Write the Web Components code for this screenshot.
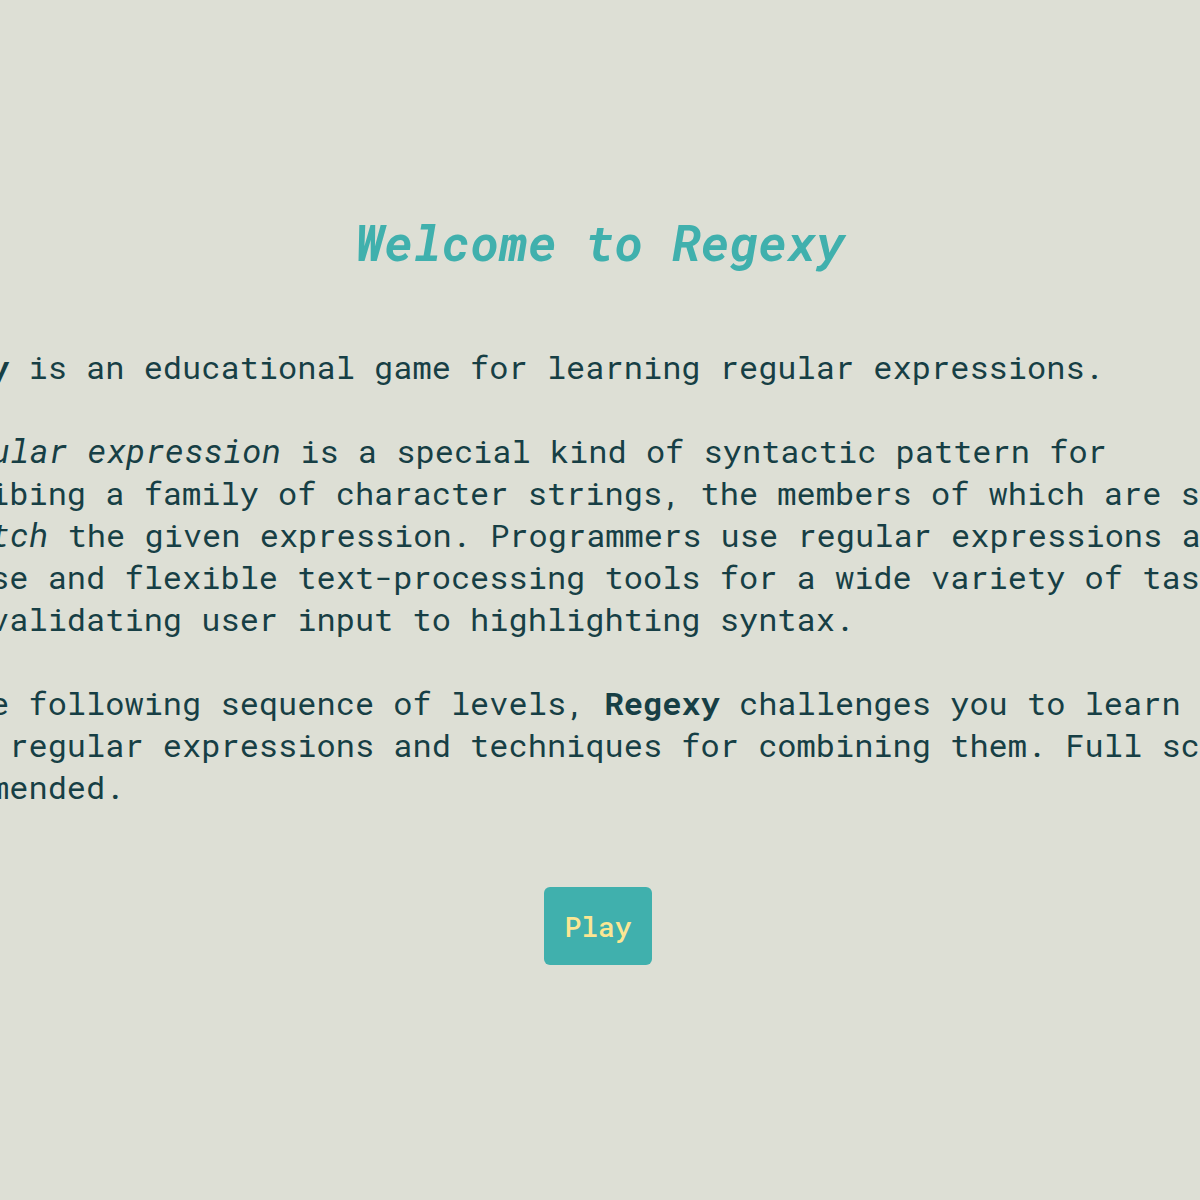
<!DOCTYPE html>
<html lang="en">
<head>
<meta charset="utf-8">
<title>Regexy</title>
<style>
  html, body { margin: 0; height: 100%; }
  body {
    --teal: #40b0ad;
    --ink: #173f45;
    --butter: #fbe693;
    background: #dddfd5;
    color: var(--ink);
    font-family: "Roboto Mono", "Liberation Mono", monospace;
    overflow: hidden;
  }
  game-intro i { font-size: 33px; line-height: 1; }
</style>
</head>
<body>
<welcome-screen>
  <game-title slot="title">Welcome to Regexy</game-title>
  <game-intro>
    <p><b>Regexy</b> is an educational game for learning regular expressions.</p>
    <p>A <i>regular expression</i> is a special kind of syntactic pattern for describing a family of character strings, the members of which are said to <i>match</i> the given expression. Programmers use regular expressions as concise and flexible text-processing tools for a wide variety of tasks, from validating user input to highlighting syntax.</p>
    <p>In the following sequence of levels, <b>Regexy</b> challenges you to learn basic regular expressions and techniques for combining them. Full screen recommended.</p>
  </game-intro>
  <play-button slot="action">Play</play-button>
</welcome-screen>
<script>
  function define(name, markup) {
    const template = document.createElement('template');
    template.innerHTML = markup;
    customElements.define(name, class extends HTMLElement {
      constructor() {
        super();
        this.attachShadow({ mode: 'open' }).append(template.content.cloneNode(true));
      }
    });
  }

  define('welcome-screen', `
    <style>
      :host { display: block; height: 100%; }
      main {
        box-sizing: border-box;
        min-height: 100%;
        padding-bottom: 24px;
        display: flex;
        flex-direction: column;
        align-items: center;
        justify-content: center;
      }
      .copy { margin: 72px 0 79px; }
    </style>
    <main>
      <slot name="title"></slot>
      <div class="copy"><slot></slot></div>
      <slot name="action"></slot>
    </main>`);

  define('game-title', `
    <style>
      :host { display: block; }
      h1 {
        margin: 0;
        color: var(--teal);
        font-size: 49px;
        line-height: 63px;
        font-weight: 700;
        font-style: italic;
      }
    </style>
    <h1><slot></slot></h1>`);

  define('game-intro', `
    <style>
      :host {
        display: block;
        box-sizing: border-box;
        width: 1412px;
        padding-right: 16px;
        font-size: 32px;
        font-weight: 450;
        line-height: 42px;
      }
      ::slotted(p) { margin: 0 0 42px; }
      ::slotted(p:last-child) { margin-bottom: 0; }
    </style>
    <slot></slot>`);

  define('play-button', `
    <style>
      :host { display: block; }
      button {
        display: block;
        margin: 0 4px 0 0;
        padding: 21px 20px 19px;
        border: 0;
        border-radius: 6px;
        background: var(--teal);
        color: var(--butter);
        font: inherit;
        font-size: 28px;
        font-weight: 500;
        line-height: 38px;
        cursor: pointer;
      }
    </style>
    <button type="button"><slot></slot></button>`);
</script>
</body>
</html>
